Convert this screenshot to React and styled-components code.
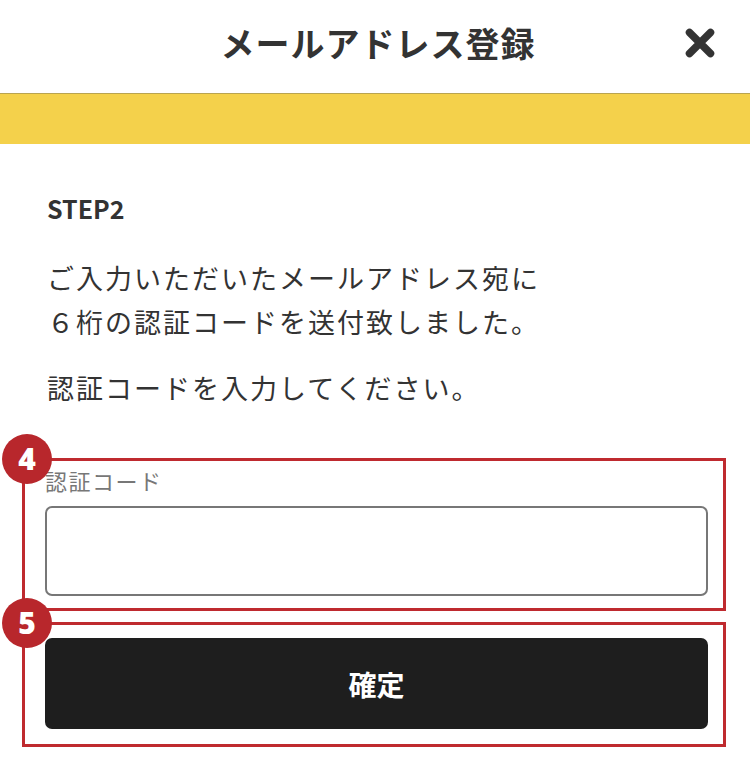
import React from "react";
import styled, { createGlobalStyle } from "styled-components";

const GlobalStyle = createGlobalStyle`
    body {
        margin: 0;
        background: #fff;
        font-family: "Noto Sans CJK JP", "Noto Sans", sans-serif;
        color: #333;
    }
`;

const Page = styled.div`
    width: 750px;
    min-height: 763px;
    background: #fff;
`;

const Header = styled.header`
    display: grid;
    grid-template-columns: 1fr auto 1fr;
    align-items: center;
    height: 94px;
    padding: 0 35px 8px;
    box-sizing: border-box;
    border-bottom: 1px solid #b9a451;
`;

const Title = styled.h1`
    grid-column: 2;
    margin: 0;
    padding-left: 6px;
    font-size: 34px;
    font-weight: 700;
    letter-spacing: 1px;
    color: #333;
`;

const CloseButton = styled.button`
    grid-column: 3;
    justify-self: end;
    display: flex;
    padding: 0;
    border: none;
    background: none;
    cursor: pointer;
`;

const Band = styled.div`
    height: 50px;
    background: #f4d14b;
`;

const Content = styled.main`
    padding: 46px 24px 0 22px;
`;

const Intro = styled.div`
    padding-left: 25px;
    margin-bottom: 48px;
`;

const Step = styled.h2`
    margin: 0 0 30px;
    font-size: 25px;
    line-height: 36px;
    font-weight: 700;
    color: #333;
`;

const Message = styled.p`
    margin: 0 0 ${(p) => p.$gap || 0}px;
    font-size: 27px;
    line-height: 44px;
    letter-spacing: 2px;
    color: #333;
`;

const Callout = styled.section`
    position: relative;
    border: 3.5px solid #bf2a2f;
    padding: ${(p) => p.$pad};
    margin-bottom: ${(p) => p.$gap || 0}px;
`;

const Badge = styled.span`
    position: absolute;
    top: -27px;
    left: -23px;
    width: 50px;
    height: 50px;
    border-radius: 50%;
    background: #b8272c;
    color: #fff;
    display: flex;
    align-items: center;
    justify-content: center;
    font-family: "Open Sans", "Noto Sans", sans-serif;
    font-size: 30px;
    font-weight: 800;
    line-height: 1;
`;

const Label = styled.label`
    display: block;
    margin-bottom: 11px;
    font-size: 22px;
    line-height: 30px;
    letter-spacing: 1.5px;
    color: #777;
`;

const CodeInput = styled.input`
    display: block;
    width: 100%;
    height: 90px;
    box-sizing: border-box;
    border: 2px solid #777;
    border-radius: 7px;
    padding: 0 16px;
    font-size: 28px;
    outline: none;
`;

const SubmitButton = styled.button`
    display: block;
    width: 100%;
    height: 91px;
    border: none;
    border-radius: 7px;
    background: #1e1e1e;
    color: #fff;
    font-family: "Noto Sans CJK JP", sans-serif;
    font-size: 28px;
    font-weight: 700;
    cursor: pointer;
`;

function CloseIcon() {
    return (
        <svg width="30" height="30" viewBox="0 0 30 30">
            <path d="M4.5 4.5 L25.5 25.5 M25.5 4.5 L4.5 25.5" stroke="#333" strokeWidth="7.5" strokeLinecap="round" />
        </svg>
    );
}

export default function App() {
    return (
        <Page>
            <GlobalStyle />
            <Header>
                <Title>メールアドレス登録</Title>
                <CloseButton aria-label="閉じる">
                    <CloseIcon />
                </CloseButton>
            </Header>
            <Band />
            <Content>
                <Intro>
                    <Step>STEP2</Step>
                    <Message $gap={22}>
                        ご入力いただいたメールアドレス宛に<br />
                        ６桁の認証コードを送付致しました。
                    </Message>
                    <Message>認証コードを入力してください。</Message>
                </Intro>
                <Callout $pad="4px 15px 12px 20px" $gap={11}>
                    <Badge>4</Badge>
                    <Label htmlFor="code">認証コード</Label>
                    <CodeInput id="code" type="text" inputMode="numeric" />
                </Callout>
                <Callout $pad="13px 15px 15px 20px">
                    <Badge>5</Badge>
                    <SubmitButton>確定</SubmitButton>
                </Callout>
            </Content>
        </Page>
    );
}
